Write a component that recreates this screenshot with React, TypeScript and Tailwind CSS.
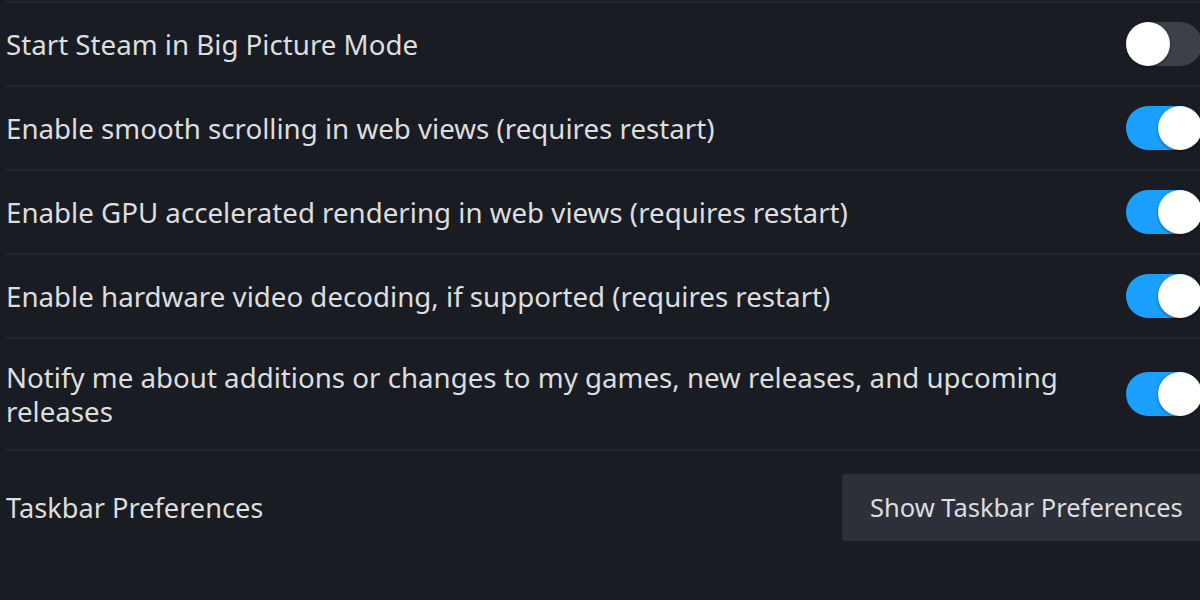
import { useState } from "react";

type Setting = {
  label: string;
  on: boolean;
};

const initialSettings: Setting[] = [
  { label: "Start Steam in Big Picture Mode", on: false },
  { label: "Enable smooth scrolling in web views (requires restart)", on: true },
  { label: "Enable GPU accelerated rendering in web views (requires restart)", on: true },
  { label: "Enable hardware video decoding, if supported (requires restart)", on: true },
  {
    label: "Notify me about additions or changes to my games, new releases, and upcoming releases",
    on: true,
  },
];

function Toggle({ on, onClick }: { on: boolean; onClick: () => void }) {
  return (
    <button
      onClick={onClick}
      className={`relative h-[44px] w-[76px] shrink-0 rounded-full transition-colors ${
        on ? "bg-[#1a9fff]" : "bg-[#3d4049]"
      }`}
    >
      <span
        className={`absolute top-0 h-[44px] w-[44px] rounded-full bg-white shadow-[0_1px_3px_rgba(0,0,0,0.45)] transition-all ${
          on ? "left-[32px]" : "left-0"
        }`}
      />
    </button>
  );
}

export default function App() {
  const [settings, setSettings] = useState(initialSettings);

  function flip(i: number) {
    setSettings((prev) => prev.map((s, j) => (j === i ? { ...s, on: !s.on } : s)));
  }

  return (
    <div className="h-[600px] w-full overflow-hidden bg-[#1a1c23] font-['Noto_Sans','Open_Sans',sans-serif] text-[#dcdedf]">
      <div className="w-[1202px] pl-[5px] pt-px">
        {settings.map((s, i) => (
          <div
            key={s.label}
            className={`flex items-center justify-between gap-6 border-t-2 border-[#23262e] ${
              i === 4 ? "h-[112px]" : "h-[84px]"
            }`}
          >
            <span className="max-w-[1080px] pl-px text-[27.7px] leading-[34px]">{s.label}</span>
            <Toggle on={s.on} onClick={() => flip(i)} />
          </div>
        ))}

        <div className="flex items-start justify-between border-t-2 border-[#23262e] pt-[23px]">
          <span className="pl-px pt-[17px] text-[27.2px] leading-[34px]">Taskbar Preferences</span>
          <button className="h-[67px] w-[360px] rounded-[3px] bg-[#2d3039] pl-[28px] text-left text-[25.5px] text-[#dcdedf]">
            Show Taskbar Preferences
          </button>
        </div>
      </div>
    </div>
  );
}
